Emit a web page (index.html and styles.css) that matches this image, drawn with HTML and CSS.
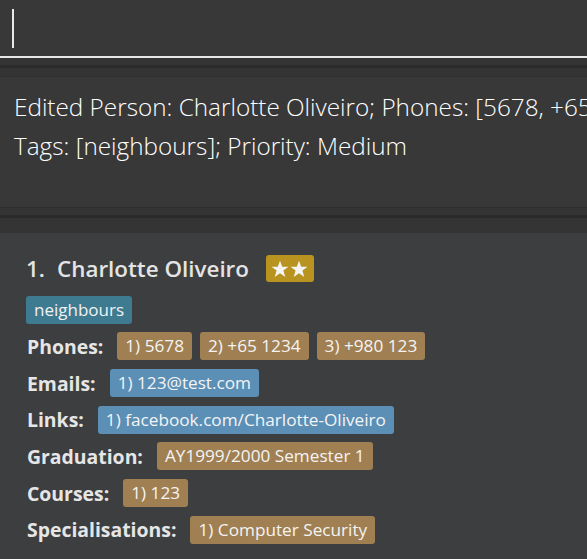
FILE: index.html
```html
<!DOCTYPE html>
<html>
<head>
<meta charset="utf-8">
<link rel="stylesheet" href="styles.css">
</head>
<body>
<div class="app">
  <div class="command-box"><span class="caret"></span></div>
  <div class="divider"><div class="divider-line"></div></div>
  <div class="result">
    <div class="result-line">Edited Person: Charlotte Oliveiro; Phones: [5678, +65 1234, +980 123]; Emails: [123@test.com]; Links: [facebook.com/Charlotte-Oliveiro];</div>
    <div class="result-line">Tags: [neighbours]; Priority: Medium</div>
  </div>
  <div class="divider divider-bottom"><div class="divider-line"></div></div>
  <div class="list">
    <div class="card">
      <div class="name-row">
        <span class="index">1.</span>
        <span class="name">Charlotte Oliveiro</span>
        <span class="badge">
          <svg width="38" height="18" viewBox="0 0 38 18"><path fill="#f4f4f4" d="M9 0.8l2.2 6h6.3l-5.1 3.8 1.9 6.4L9 13.2 3.7 17l1.9-6.4L0.5 6.8h6.3z"/><path fill="#f4f4f4" d="M28 0.8l2.2 6h6.3l-5.1 3.8 1.9 6.4L28 13.2 22.7 17l1.9-6.4-5.1-3.8h6.3z"/></svg>
        </span>
      </div>
      <div class="tags"><span class="tag">neighbours</span></div>
      <div class="field"><span class="label">Phones:</span><span class="chips"><span class="chip brown">1) 5678</span><span class="chip brown">2) +65 1234</span><span class="chip brown">3) +980 123</span></span></div>
      <div class="field"><span class="label">Emails:</span><span class="chips"><span class="chip blue">1) 123@test.com</span></span></div>
      <div class="field"><span class="label">Links:</span><span class="chips"><span class="chip blue">1) facebook.com/Charlotte-Oliveiro</span></span></div>
      <div class="field"><span class="label">Graduation:</span><span class="chips"><span class="chip brown">AY1999/2000 Semester 1</span></span></div>
      <div class="field"><span class="label">Courses:</span><span class="chips"><span class="chip brown">1) 123</span></span></div>
      <div class="field"><span class="label">Specialisations:</span><span class="chips"><span class="chip brown">1) Computer Security</span></span></div>
    </div>
  </div>
</div>
</body>
</html>
```
FILE: styles.css
```css
html, body {
  margin: 0;
  padding: 0;
  background: #3c3e40;
  overflow: hidden;
}
.app {
  width: 587px;
  height: 559px;
  display: flex;
  flex-direction: column;
  font-family: "Open Sans", "Noto Sans", sans-serif;
}
.command-box {
  height: 56px;
  background: #383838;
  border-bottom: 2px solid #e6e6e6;
  box-sizing: content-box;
  display: flex;
  align-items: flex-start;
  padding-left: 12px;
}
.caret {
  display: block;
  width: 2px;
  height: 39px;
  margin-top: 9px;
  background: #e8e8e8;
}
.divider {
  height: 19px;
  background: #343434;
  display: flex;
  flex-direction: column;
  padding-top: 7px;
  box-sizing: border-box;
  border-bottom: 1px solid #2f2f2f;
}
.divider-line {
  height: 3px;
  background: #2a2a2a;
}
.divider-bottom {
  height: 26px;
  border-top: 1px solid #2f2f2f;
  border-bottom: none;
}
.result {
  height: 130px;
  background: #383838;
  padding: 10px 0 0 14px;
  box-sizing: border-box;
  color: #ffffff;
  font-weight: 300;
  font-size: 24.3px;
  line-height: 39px;
  overflow: hidden;
}
.result-line {
  white-space: pre;
}
.list {
  flex: 1;
  background: #3c3e40;
  padding: 22px 0 0 26px;
}
.card {
  display: flex;
  flex-direction: column;
  gap: 8.7px;
}
.name-row {
  display: flex;
  align-items: center;
  height: 27px;
  margin-bottom: 5px;
  color: #e4e4e4;
  font-weight: 600;
  font-size: 22.4px;
}
.index {
  width: 31px;
}
.name {
  margin-right: 17px;
}
.badge {
  display: flex;
  align-items: center;
  justify-content: center;
  width: 48px;
  height: 27px;
  background: #b9931f;
  border-radius: 3px;
}
.tags {
  display: flex;
}
.tag {
  height: 28px;
  line-height: 28px;
  padding: 0 8px;
  background: #3e7b91;
  color: #f2f2f2;
  font-size: 17px;
  border-radius: 3px;
}
.field {
  display: flex;
  align-items: center;
  height: 28px;
}
.label {
  color: #e6e6e6;
  font-weight: 700;
  font-size: 19.4px;
  padding-left: 1px;
  margin-right: 14px;
}
.chips {
  display: flex;
  gap: 8px;
}
.chip {
  height: 28px;
  line-height: 28px;
  padding: 0 8px;
  color: #f4f4f4;
  font-size: 17.2px;
  border-radius: 3px;
  white-space: nowrap;
}
.brown {
  background: #a08052;
}
.blue {
  background: #5b8fb6;
}
```
